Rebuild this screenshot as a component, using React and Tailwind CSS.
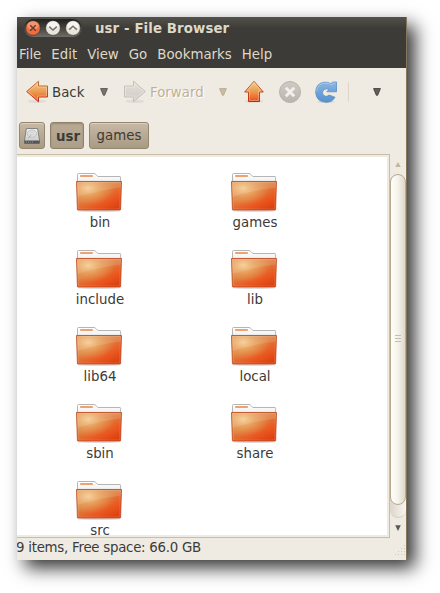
import React from "react";

const folders = ["bin", "games", "include", "lib", "lib64", "local", "sbin", "share", "src"];
const menus = ["File", "Edit", "View", "Go", "Bookmarks", "Help"];

function Gradients() {
  return (
    <svg className="absolute h-0 w-0" aria-hidden="true">
      <defs>
        <linearGradient id="folderBase" x1="0" y1="0" x2="0.75" y2="1">
          <stop offset="0" stopColor="#e0894a" />
          <stop offset="0.45" stopColor="#dd8040" />
          <stop offset="0.8" stopColor="#ea551e" />
          <stop offset="1" stopColor="#dc4312" />
        </linearGradient>
        <radialGradient id="folderGlow" cx="0.26" cy="0.24" r="0.6">
          <stop offset="0" stopColor="#f6d094" stopOpacity="0.95" />
          <stop offset="0.5" stopColor="#ecac66" stopOpacity="0.6" />
          <stop offset="1" stopColor="#e8a060" stopOpacity="0" />
        </radialGradient>
        <linearGradient id="paper" x1="0" y1="0" x2="0" y2="1">
          <stop offset="0" stopColor="#ffffff" />
          <stop offset="0.6" stopColor="#f4f4f4" />
          <stop offset="1" stopColor="#c4c4c4" />
        </linearGradient>
        <linearGradient id="arrowOrange" x1="0" y1="0" x2="0" y2="1">
          <stop offset="0" stopColor="#f3cf95" />
          <stop offset="0.5" stopColor="#eb9c50" />
          <stop offset="1" stopColor="#ea4f1c" />
        </linearGradient>
        <linearGradient id="arrowStroke" x1="0" y1="0" x2="0" y2="1">
          <stop offset="0" stopColor="#c27334" />
          <stop offset="1" stopColor="#c22b0a" />
        </linearGradient>
        <linearGradient id="arrowGray" x1="0" y1="0" x2="0" y2="1">
          <stop offset="0" stopColor="#e5dfd9" />
          <stop offset="1" stopColor="#d2cbc5" />
        </linearGradient>
        <linearGradient id="blue" x1="0" y1="0" x2="0" y2="1">
          <stop offset="0" stopColor="#8ab5e0" />
          <stop offset="1" stopColor="#5590d0" />
        </linearGradient>
        <linearGradient id="stopGray" x1="0" y1="0" x2="0" y2="1">
          <stop offset="0" stopColor="#d0cac5" />
          <stop offset="1" stopColor="#bbb4af" />
        </linearGradient>
        <linearGradient id="disk" x1="0" y1="0" x2="0" y2="1">
          <stop offset="0" stopColor="#f2f2f2" />
          <stop offset="1" stopColor="#c5c5c5" />
        </linearGradient>
      </defs>
    </svg>
  );
}

function Folder() {
  return (
    <svg width="48" height="40" viewBox="0 0 48 40" className="mr-px block">
      <ellipse cx="24" cy="37.8" rx="22" ry="1.3" fill="#000" opacity="0.14" />
      <path d="M2.5 11V1.4Q2.5.5 3.5.5H19Q20 .5 20.8 1.4L22.8 3.5H45Q45.6 3.5 45.6 4.4V11Z" fill="url(#paper)" stroke="#b5b5b5" />
      <rect x="5" y="2" width="13" height="2" rx="0.8" fill="#f0a172" />
      <path d="M1.5 8.5H46.5L45.6 36.5Q45.6 37 45 37H3Q2.4 37 2.4 36.5Z" fill="url(#folderBase)" />
      <path d="M1.5 8.5H46.5L45.6 36.5Q45.6 37 45 37H3Q2.4 37 2.4 36.5Z" fill="url(#folderGlow)" />
      <path d="M2 9H46L45.8 14.5Q22 17.5 2.3 24Z" fill="#fff" opacity="0.12" />
      <path d="M2.6 9.6H45.4L44.6 36H3.4Z" fill="none" stroke="#fff" strokeOpacity="0.12" />
      <path d="M1.5 8.5H46.5L45.6 36.5Q45.6 37 45 37H3Q2.4 37 2.4 36.5Z" fill="none" stroke="#b8401a" strokeOpacity="0.75" />
    </svg>
  );
}

function Arrow({ dir }) {
  const gray = dir === "right";
  return (
    <svg width="24" height="24" viewBox="0 0 24 24" className="block shrink-0">
      <ellipse cx="12" cy="21.2" rx="9.5" ry="1.8" fill="#000" opacity="0.06" />
      {dir === "up" ? (
        <>
          <path d="M12 1.2 21.3 12H17.5V21.5H6.5V12H2.7Z" fill="url(#arrowOrange)" stroke="url(#arrowStroke)" />
          <path d="M12 2.9 19.1 11H16.5V20.5H7.5V11H4.9Z" fill="none" stroke="#fff" strokeOpacity="0.28" />
        </>
      ) : (
        <g transform={gray ? "matrix(-1 0 0 1 24 0)" : undefined}>
          <path d="M1.7 11.5 13.5 1.2V6H22.5V17H13.5V21.8Z" fill={gray ? "url(#arrowGray)" : "url(#arrowOrange)"} stroke={gray ? "#c7c0ba" : "url(#arrowStroke)"} />
          <path d="M3.3 11.5 12.5 3.4V7H21.5V16H12.5V19.6Z" fill="none" stroke="#fff" strokeOpacity="0.3" />
        </g>
      )}
    </svg>
  );
}

function Triangle({ color, edge }) {
  return (
    <svg width="8" height="8" viewBox="0 0 8 8" className="block shrink-0">
      <path d="M.6.6H7.4L4.6 7.3H3.4Z" fill={color} stroke={edge} strokeWidth="0.9" />
    </svg>
  );
}

function WindowButton({ close, path }) {
  return (
    <svg width="16" height="16" viewBox="0 0 16 16" className="block">
      <circle cx="8" cy="8" r="7.3" fill={close ? "#ee6c3e" : "#eae5db"} stroke="#302f2b" strokeWidth="0.5" />
      <ellipse cx="8" cy="5.4" rx="5.6" ry="4.2" fill="#fff" opacity={close ? 0.28 : 0.6} />
      <path d={path} fill="none" stroke={close ? "#6b3a28" : "#77736c"} strokeWidth="1.5" />
    </svg>
  );
}

export default function App() {
  return (
    <div className="h-[593px] w-[440px] overflow-hidden bg-white pl-[17px] pt-[17px] font-['DejaVu_Sans',sans-serif] text-[13.33px] leading-[16px] text-[#3c3b37]">
      <Gradients />
      <div className="flex h-[543px] w-[390px] flex-col overflow-hidden border-r border-[#84755c] bg-[#efebe3] shadow-[8px_8px_17px_rgba(0,0,0,0.8)]">
        <header className="h-[51px] shrink-0 bg-[#3c3b37] text-[#dfd8c8]">
          <div className="flex h-[23px] items-center bg-linear-to-b from-[#53524c] to-[#3c3b37] to-50% pl-[7px]">
            <div className="-mt-px flex h-[18px] w-[58px] items-center justify-center gap-1 rounded-full bg-linear-to-b from-[#20201d] to-[#6e6d67]">
              <WindowButton close path="M5.2 5.2 10.8 10.8M10.8 5.2 5.2 10.8" />
              <WindowButton path="M4.2 6.6 8 10 11.8 6.6" />
              <WindowButton path="M4.2 9.6 8 6.2 11.8 9.6" />
            </div>
            <span className="ml-[13px] font-bold tracking-[0.1px]">usr - File Browser</span>
          </div>
          <nav className="flex h-7 items-center gap-[10px] pl-[2px] pt-[2px]">
            {menus.map((m) => <span key={m}>{m}</span>)}
          </nav>
        </header>

        <div className="flex h-12 shrink-0 items-center pl-2">
          <Arrow dir="left" />
          <span className="ml-[3px] mt-px w-[47.5px]">Back</span>
          <Triangle color="#77756f" edge="#54524d" />
          <span className="ml-[15.5px]"><Arrow dir="right" /></span>
          <span className="ml-[3px] mt-px w-[68.5px] text-[#bfb197] [text-shadow:1px_1px_0_#fff]">Forward</span>
          <Triangle color="#c8bda4" edge="#b9ac90" />
          <span className="ml-[15.5px]"><Arrow dir="up" /></span>
          <svg width="24" height="24" viewBox="0 0 24 24" className="ml-3 block shrink-0">
            <circle cx="12" cy="12" r="10.5" fill="url(#stopGray)" stroke="#b9b2ad" />
            <path d="M7.8 7.8 16.2 16.2M16.2 7.8 7.8 16.2" stroke="#f3efea" strokeWidth="3" />
          </svg>
          <svg width="24" height="24" viewBox="0 0 24 24" className="ml-3 block shrink-0">
            <ellipse cx="12" cy="21.8" rx="9" ry="1.4" fill="#000" opacity="0.08" />
            <path d="M22.5 2V11.8H12.8L15 9.4Q12.4 8.2 10.3 9.6Q8.3 11 8.5 13.2Q9 15.8 11.6 16.3Q13.6 16.4 15 15L21 17.2Q18.4 22.3 12 22.3Q2.4 21.8 1.6 12.5Q1.9 3.6 9.6 2.2Q14.2 1.8 17.6 3.8L18.5 2Z" fill="url(#blue)" stroke="#4f88c4" strokeWidth="0.7" />
            <path d="M2.7 11.5Q3.4 4.6 9.7 3.2Q14.4 2.7 18 5L19.2 3H21.5" fill="none" stroke="#c0d9f0" strokeOpacity="0.6" />
          </svg>
          <div className="ml-[10px] mr-6 h-5 w-px bg-[#ddd5c6]" />
          <Triangle color="#62605b" edge="#3c3b37" />
        </div>

        <div className="flex h-[38px] shrink-0 items-start gap-[5px] pl-[2px] pt-[6px]">
          <div className="flex h-[27px] w-[26px] items-center justify-center rounded-[3px] border border-[#958670] bg-linear-to-b from-[#c7b9a6] to-[#a99a83] shadow-[inset_0_1px_0_#d9cfc0]">
            <svg width="18" height="18" viewBox="0 0 18 18">
              <path d="M3.4 1.5H14.6L16.5 13V16.5H1.5V13Z" fill="url(#disk)" stroke="#777" strokeWidth="0.9" />
              <ellipse cx="9" cy="6.7" rx="4.7" ry="3.7" fill="#dedede" stroke="#b5b5b5" strokeWidth="0.7" />
              <ellipse cx="9" cy="6.7" rx="1.4" ry="1" fill="#fff" stroke="#aaa" strokeWidth="0.5" />
              <path d="M5 11.5 8 8.2" stroke="#aaa" />
              <path d="M1.5 13.5H16.5V16.5H1.5Z" fill="#545454" />
              <path d="M3 15H11" stroke="#999" strokeDasharray="1 1" />
            </svg>
          </div>
          <div className="flex h-[27px] w-[34px] items-center justify-center rounded-[3px] border border-[#8f8069] bg-linear-to-b from-[#b9aa95] to-[#ada08a] pl-[2px] pt-[2px] font-bold shadow-[inset_0_1px_2px_#988a75]">usr</div>
          <div className="flex h-[27px] w-[60px] items-center justify-center rounded-[3px] border border-[#958670] bg-linear-to-b from-[#c7b9a6] to-[#a99a83] shadow-[inset_0_1px_0_#d9cfc0]">games</div>
        </div>

        <div className="flex h-[384px] shrink-0">
          <main className="h-[384px] w-[373px] shrink-0 overflow-hidden border-y border-r border-[#cabda7] pb-[2px] pr-[2px] pt-[2px]">
            <div className="grid h-[378px] grid-cols-[155px_155px] auto-rows-[77px] overflow-hidden bg-white pl-[5px] pt-4">
              {folders.map((name) => (
                <div key={name} className="flex flex-col items-center">
                  <Folder />
                  <span className="ml-px mt-[2px]">{name}</span>
                </div>
              ))}
            </div>
          </main>
          <aside className="flex w-4 flex-col items-center">
            <svg width="6" height="5" viewBox="0 0 6 5" className="mt-[8px] block shrink-0"><path d="M3 0 5.8 5H.2Z" fill="#c3b69f" /></svg>
            <div className="mt-[7px] h-[344px] w-4 shrink-0 rounded-full border-b border-[#d8cdbb] bg-linear-to-r from-[#ddd5c8] to-[#f8f6f2]">
              <div className="flex h-[331px] w-4 flex-col items-center justify-center gap-[2px] rounded-full border border-[#b9aa8c] bg-linear-to-r from-[#fffefa] via-[#f5f2eb] to-[#dfd8ca] pb-[2px]">
                <i className="h-px w-[6px] bg-[#c8bda9]" />
                <i className="h-px w-[6px] bg-[#c8bda9]" />
                <i className="h-px w-[6px] bg-[#c8bda9]" />
              </div>
            </div>
            <svg width="6" height="6" viewBox="0 0 6 6" className="mt-[7px] block shrink-0"><path d="M.2.2H5.8L3 6Z" fill="#5a5853" /></svg>
          </aside>
        </div>

        <footer className="flex h-[22px] shrink-0 justify-between overflow-hidden">
          <span className="-ml-px mt-[2px] whitespace-nowrap tracking-[-0.25px]">9 items, Free space: 66.0 GB</span>
          <svg width="12" height="22" viewBox="0 0 12 22" fill="#d2c8b8">
            {[0, 1, 2, 3].map((r) => [...Array(r + 1).keys()].map((c) => (
              <rect key={`${r}-${c}`} x={10 - c * 3} y={7 + r * 3} width="1" height="1" />
            )))}
          </svg>
        </footer>
      </div>
    </div>
  );
}
